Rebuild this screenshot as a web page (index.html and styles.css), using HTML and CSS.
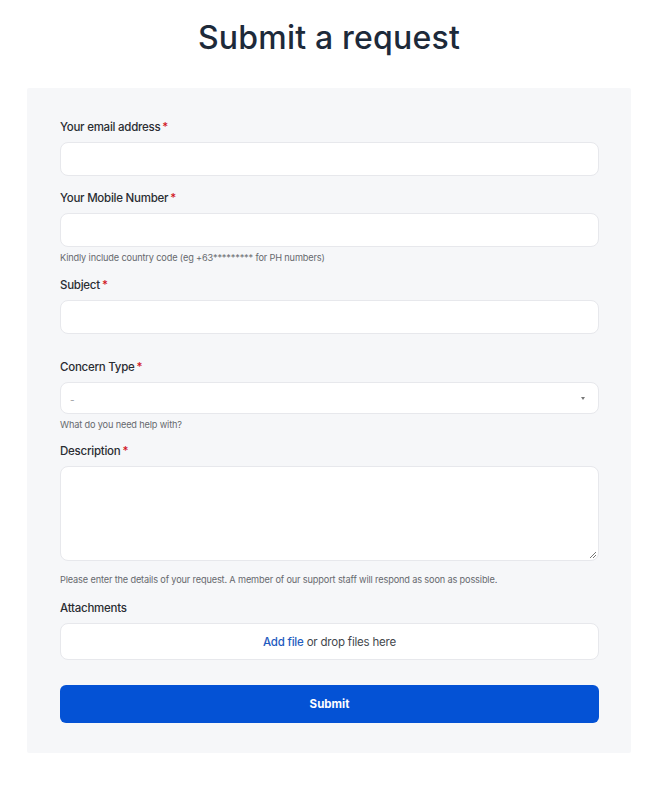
FILE: index.html
```html
<!DOCTYPE html>
<html lang="en">
<head>
<meta charset="utf-8">
<title>Submit a request</title>
<link rel="stylesheet" href="styles.css">
</head>
<body>
<main class="page">
<h1 class="title">Submit a request</h1>
<form class="card">
  <div class="field">
    <label class="label">Your email address<span class="req">*</span></label>
    <div class="input"></div>
  </div>
  <div class="field">
    <label class="label">Your Mobile Number<span class="req">*</span></label>
    <div class="input"></div>
    <p class="hint">Kindly include country code (eg +63********* for PH numbers)</p>
  </div>
  <div class="field field-tight">
    <label class="label">Subject<span class="req">*</span></label>
    <div class="input"></div>
  </div>
  <div class="field field-wide">
    <label class="label">Concern Type<span class="req">*</span></label>
    <div class="input select"><span class="dash">-</span><span class="caret"></span></div>
    <p class="hint">What do you need help with?</p>
  </div>
  <div class="field field-desc">
    <label class="label">Description<span class="req">*</span></label>
    <div class="input textarea">
      <svg class="grip" width="8" height="8" viewBox="0 0 8 8"><path d="M7 1 L1 7 M7 4 L4 7" stroke="#777" stroke-width="1"/></svg>
    </div>
    <p class="hint hint-gap">Please enter the details of your request. A member of our support staff will respond as soon as possible.</p>
  </div>
  <div class="field field-attach">
    <label class="label">Attachments</label>
    <div class="input drop"><a class="link">Add file</a>&nbsp;or drop files here</div>
  </div>
  <button class="submit" type="button">Submit</button>
</form>
</main>
</body>
</html>
```
FILE: styles.css
```css
* { box-sizing: border-box; }
body {
  margin: 0;
  background: #ffffff;
  font-family: Inter, "Noto Sans", sans-serif;
  color: #262a30;
}
.page {
  margin-left: 27px;
  width: 604px;
}
.title {
  margin: 18px 0 0;
  text-align: center;
  font-size: 32px;
  line-height: 40px;
  font-weight: 500;
  color: #1d2a3a;
  letter-spacing: 0.2px;
}
.card {
  margin-top: 30px;
  background: #f6f7f9;
  padding: 31px 32px 30px 33px;
  display: flex;
  flex-direction: column;
  border-radius: 2px;
}
.field {
  display: flex;
  flex-direction: column;
  margin-bottom: 14px;
}
.field-tight { margin-top: -2px; }
.field-wide { margin-top: 11px; }
.field-desc { margin-top: -3px; }
.field-attach { margin-top: -1px; }
.label {
  font-size: 11.5px;
  line-height: 16px;
  font-weight: 500;
  color: #2a2d33;
  margin-bottom: 7px;
  letter-spacing: -0.25px;
}
.req { color: #d0121b; margin-left: 2px; }
.input {
  height: 34px;
  background: #ffffff;
  border: 1px solid #e7e8ec;
  border-radius: 8px;
}
.select {
  height: 32px;
  display: flex;
  align-items: center;
  justify-content: space-between;
  padding: 0 13px 0 9px;
}
.dash { font-size: 10px; color: #9a9ca0; margin-top: 3px; }
.caret {
  width: 0; height: 0;
  border-left: 2.5px solid transparent;
  border-right: 2.5px solid transparent;
  border-top: 3px solid #777;
}
.textarea {
  height: 95px;
  position: relative;
}
.grip { position: absolute; right: 1px; bottom: 1px; }
.hint {
  margin: 4px 0 0;
  font-size: 9.2px;
  line-height: 14px;
  color: #66696e;
  letter-spacing: -0.15px;
}
.hint-gap { margin-top: 12px; }
.drop {
  height: 37px;
  display: flex;
  align-items: center;
  justify-content: center;
  font-size: 11.5px;
  color: #44474c;
  letter-spacing: -0.2px;
}
.link { color: #1f5cc0; font-weight: 500; }
.submit {
  margin-top: 11px;
  height: 38px;
  width: 100%;
  border: none;
  border-radius: 6px;
  background: #0452d5;
  color: #ffffff;
  font-family: Inter, "Noto Sans", sans-serif;
  font-size: 11.5px;
  font-weight: 700;
}
```
